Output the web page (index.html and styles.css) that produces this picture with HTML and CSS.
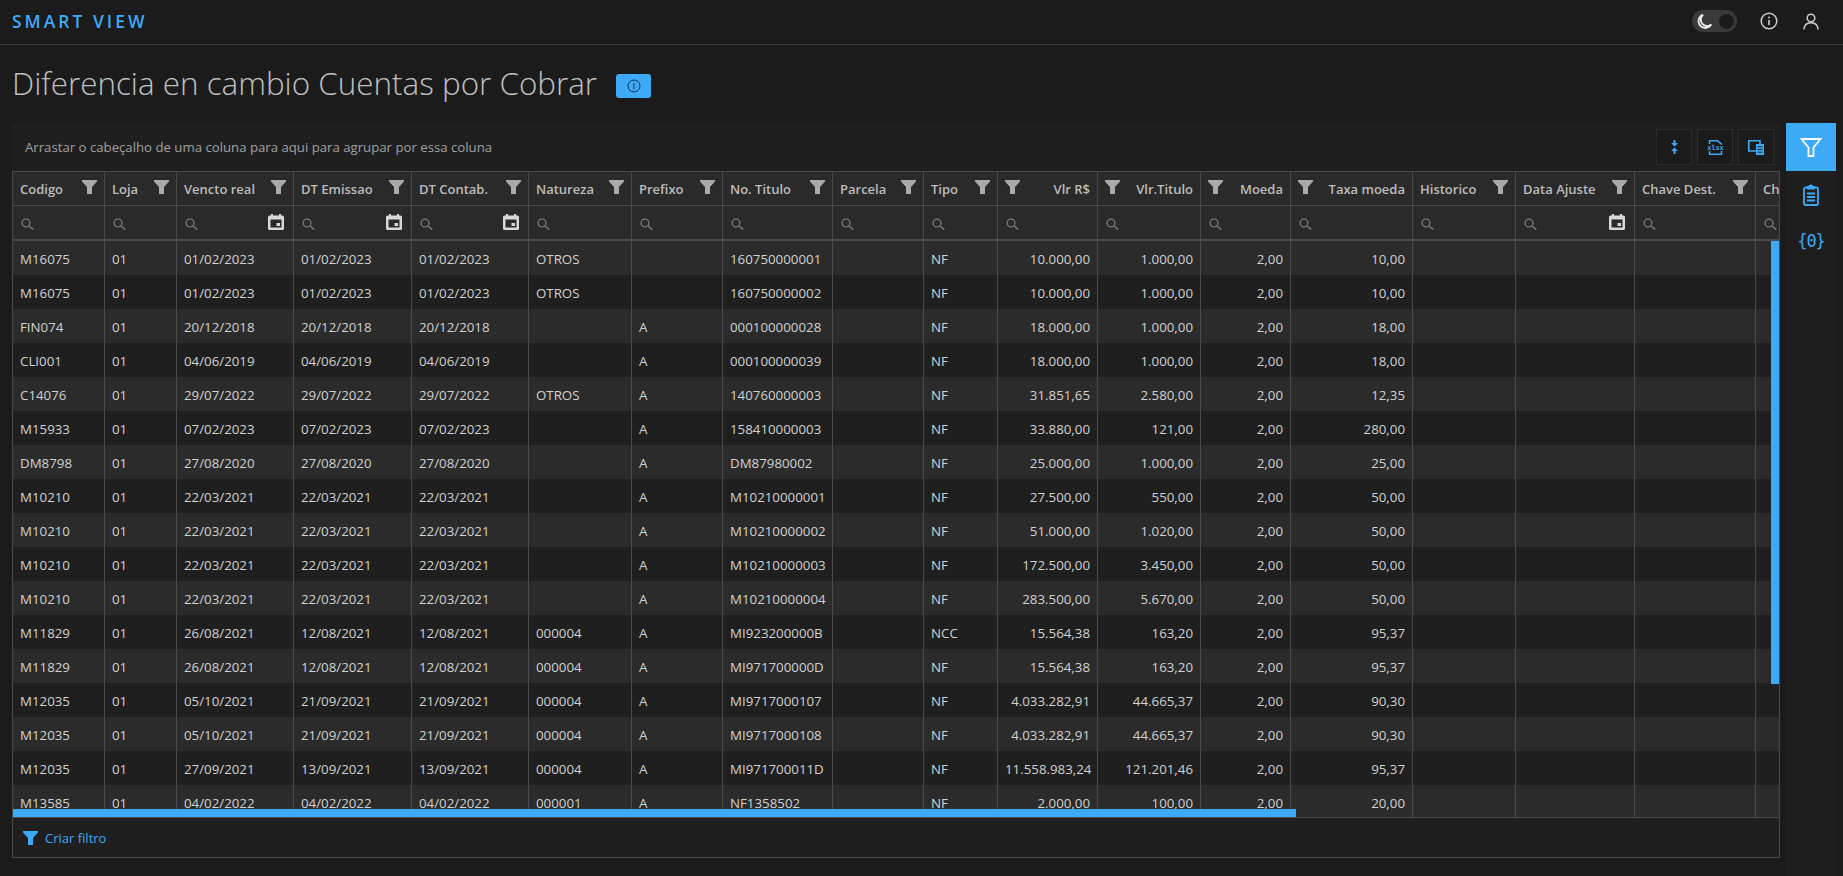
FILE: index.html
```html
<!DOCTYPE html>
<html lang="pt">
<head>
<meta charset="utf-8">
<title>Smart View</title>
<link rel="stylesheet" href="styles.css">
</head>
<body>
<svg class="defs" width="0" height="0">
  <symbol id="funnel" viewBox="0 0 15 14"><path d="M0 0H15V1.500L10 7V14H5V7L0 1.500Z"/></symbol>
  <symbol id="search" viewBox="0 0 13 12"><circle cx="5" cy="5" r="3.9" fill="none" stroke="currentColor" stroke-width="1.4"/><path d="M8 8L12.3 11.6" stroke="currentColor" stroke-width="1.6" fill="none"/></symbol>
  <symbol id="cal" viewBox="0 0 16 16"><path fill-rule="evenodd" d="M3 0H5V1.5H11V0H13V1.5H14.5A1.5 1.5 0 0 1 16 3V14.5A1.5 1.5 0 0 1 14.5 16H1.5A1.5 1.5 0 0 1 0 14.5V3A1.5 1.5 0 0 1 1.500 1.500H3ZM2.500 5.500V13.500H13.500V5.500ZM8.500 9H12V12H8.500Z"/></symbol>
</svg>

<header class="topbar">
  <div class="brand">SMART VIEW</div>
  <div class="top-actions">
    <div class="toggle">
      <svg class="moon" width="15" height="15" viewBox="0 0 15 15"><path d="M6 .8A6.800 6.800 0 1 0 14.300 10.500 6.200 6.200 0 0 1 6 .8Z" fill="none" stroke="#eee" stroke-width="1.800"/></svg>
      <span class="knob"></span>
    </div>
    <svg class="top-info" width="18" height="18" viewBox="0 0 18 18"><circle cx="9" cy="9" r="7.800" fill="none" stroke="#ccc" stroke-width="1.500"/><path d="M9 8V13" stroke="#ccc" stroke-width="1.700"/><circle cx="9" cy="5.500" r="1" fill="#ccc"/></svg>
    <svg class="top-user" width="18" height="17" viewBox="0 0 18 17"><circle cx="9" cy="5" r="3.800" fill="none" stroke="#ccc" stroke-width="1.500"/><path d="M1.800 16.500C2.300 12 5 9.700 9 9.700S15.700 12 16.200 16.500" fill="none" stroke="#ccc" stroke-width="1.500"/></svg>
  </div>
</header>

<div class="layout">
  <main class="main">
    <div class="title-row">
      <h1 class="title">Diferencia en cambio Cuentas por Cobrar</h1>
      <span class="badge">
        <svg width="14" height="14" viewBox="0 0 14 14"><circle cx="7" cy="7" r="6" fill="none" stroke="#12314a" stroke-width="1"/><path d="M7 4V10.500" stroke="#12314a" stroke-width="1"/></svg>
      </span>
    </div>

    <div class="toolbar">
      <span class="group-hint">Arrastar o cabeçalho de uma coluna para aqui para agrupar por essa coluna</span>
      <div class="tool-buttons">
        <button class="tool-btn" type="button">
          <svg width="7" height="14" viewBox="0 0 7 14" fill="#3daaf8"><path d="M2.500 0H4.500V3H7L3.500 6.500 0 3H2.500ZM3.500 7.500L7 11H4.500V14H2.500V11H0Z"/></svg>
        </button>
        <button class="tool-btn" type="button">
          <svg width="17" height="15" viewBox="0 0 17 15" fill="none" stroke="#3daaf8" stroke-width="1.500"><path d="M2.500 4V.8H10.500L14.500 4.200V4.500M2.500 11V14.200H14.500V11"/><text x="8.500" y="10" class="xlsx" text-anchor="middle">xlsx</text></svg>
        </button>
        <button class="tool-btn" type="button">
          <svg width="16" height="15" viewBox="0 0 16 15" fill="none" stroke="#3daaf8" stroke-width="1.600"><path d="M8 11H.8V.8H12V4"/><path d="M8 4H16V15H8Z" fill="#3daaf8" stroke="none"/><path d="M9.500 6.800H14.500M9.500 9.500H14.500M9.500 12.200H14.500" stroke="#1b1b1b" stroke-width="1"/></svg>
        </button>
      </div>
    </div>

    <section class="frame">
      <div class="grid-scroll">
        <table class="grid">
          <colgroup>
            <col class="c92"><col class="c72"><col class="c117"><col class="c118"><col class="c117"><col class="c103"><col class="c91"><col class="c110"><col class="c91"><col class="c74"><col class="c100"><col class="c103"><col class="c90"><col class="c122"><col class="c103"><col class="c119"><col class="c121"><col class="c120">
          </colgroup>
          <thead>
            <tr class="head">
              <th><div class="th"><span>Codigo</span><svg class="fn"><use href="#funnel"/></svg></div></th>
              <th><div class="th"><span>Loja</span><svg class="fn"><use href="#funnel"/></svg></div></th>
              <th><div class="th"><span>Vencto real</span><svg class="fn"><use href="#funnel"/></svg></div></th>
              <th><div class="th"><span>DT Emissao</span><svg class="fn"><use href="#funnel"/></svg></div></th>
              <th><div class="th"><span>DT Contab.</span><svg class="fn"><use href="#funnel"/></svg></div></th>
              <th><div class="th"><span>Natureza</span><svg class="fn"><use href="#funnel"/></svg></div></th>
              <th><div class="th"><span>Prefixo</span><svg class="fn"><use href="#funnel"/></svg></div></th>
              <th><div class="th"><span>No. Titulo</span><svg class="fn"><use href="#funnel"/></svg></div></th>
              <th><div class="th"><span>Parcela</span><svg class="fn"><use href="#funnel"/></svg></div></th>
              <th><div class="th"><span>Tipo</span><svg class="fn"><use href="#funnel"/></svg></div></th>
              <th><div class="th"><svg class="fn"><use href="#funnel"/></svg><span>Vlr R$</span></div></th>
              <th><div class="th"><svg class="fn"><use href="#funnel"/></svg><span>Vlr.Titulo</span></div></th>
              <th><div class="th"><svg class="fn"><use href="#funnel"/></svg><span>Moeda</span></div></th>
              <th><div class="th"><svg class="fn"><use href="#funnel"/></svg><span>Taxa moeda</span></div></th>
              <th><div class="th"><span>Historico</span><svg class="fn"><use href="#funnel"/></svg></div></th>
              <th><div class="th"><span>Data Ajuste</span><svg class="fn"><use href="#funnel"/></svg></div></th>
              <th><div class="th"><span>Chave Dest.</span><svg class="fn"><use href="#funnel"/></svg></div></th>
              <th><div class="th"><span>Ch</span></div></th>
            </tr>
            <tr class="filter">
              <th><div class="fc"><svg class="sr"><use href="#search"/></svg></div></th>
              <th><div class="fc"><svg class="sr"><use href="#search"/></svg></div></th>
              <th><div class="fc"><svg class="sr"><use href="#search"/></svg><svg class="cl"><use href="#cal"/></svg></div></th>
              <th><div class="fc"><svg class="sr"><use href="#search"/></svg><svg class="cl"><use href="#cal"/></svg></div></th>
              <th><div class="fc"><svg class="sr"><use href="#search"/></svg><svg class="cl"><use href="#cal"/></svg></div></th>
              <th><div class="fc"><svg class="sr"><use href="#search"/></svg></div></th>
              <th><div class="fc"><svg class="sr"><use href="#search"/></svg></div></th>
              <th><div class="fc"><svg class="sr"><use href="#search"/></svg></div></th>
              <th><div class="fc"><svg class="sr"><use href="#search"/></svg></div></th>
              <th><div class="fc"><svg class="sr"><use href="#search"/></svg></div></th>
              <th><div class="fc"><svg class="sr"><use href="#search"/></svg></div></th>
              <th><div class="fc"><svg class="sr"><use href="#search"/></svg></div></th>
              <th><div class="fc"><svg class="sr"><use href="#search"/></svg></div></th>
              <th><div class="fc"><svg class="sr"><use href="#search"/></svg></div></th>
              <th><div class="fc"><svg class="sr"><use href="#search"/></svg></div></th>
              <th><div class="fc"><svg class="sr"><use href="#search"/></svg><svg class="cl"><use href="#cal"/></svg></div></th>
              <th><div class="fc"><svg class="sr"><use href="#search"/></svg></div></th>
              <th><div class="fc"><svg class="sr"><use href="#search"/></svg></div></th>
            </tr>
          </thead>
          <tbody>
            <tr><td>M16075</td><td>01</td><td>01/02/2023</td><td>01/02/2023</td><td>01/02/2023</td><td>OTROS</td><td></td><td>160750000001</td><td></td><td>NF</td><td class="n">10.000,00</td><td class="n">1.000,00</td><td class="n">2,00</td><td class="n">10,00</td><td></td><td></td><td></td><td></td></tr>
            <tr><td>M16075</td><td>01</td><td>01/02/2023</td><td>01/02/2023</td><td>01/02/2023</td><td>OTROS</td><td></td><td>160750000002</td><td></td><td>NF</td><td class="n">10.000,00</td><td class="n">1.000,00</td><td class="n">2,00</td><td class="n">10,00</td><td></td><td></td><td></td><td></td></tr>
            <tr><td>FIN074</td><td>01</td><td>20/12/2018</td><td>20/12/2018</td><td>20/12/2018</td><td></td><td>A</td><td>000100000028</td><td></td><td>NF</td><td class="n">18.000,00</td><td class="n">1.000,00</td><td class="n">2,00</td><td class="n">18,00</td><td></td><td></td><td></td><td></td></tr>
            <tr><td>CLI001</td><td>01</td><td>04/06/2019</td><td>04/06/2019</td><td>04/06/2019</td><td></td><td>A</td><td>000100000039</td><td></td><td>NF</td><td class="n">18.000,00</td><td class="n">1.000,00</td><td class="n">2,00</td><td class="n">18,00</td><td></td><td></td><td></td><td></td></tr>
            <tr><td>C14076</td><td>01</td><td>29/07/2022</td><td>29/07/2022</td><td>29/07/2022</td><td>OTROS</td><td>A</td><td>140760000003</td><td></td><td>NF</td><td class="n">31.851,65</td><td class="n">2.580,00</td><td class="n">2,00</td><td class="n">12,35</td><td></td><td></td><td></td><td></td></tr>
            <tr><td>M15933</td><td>01</td><td>07/02/2023</td><td>07/02/2023</td><td>07/02/2023</td><td></td><td>A</td><td>158410000003</td><td></td><td>NF</td><td class="n">33.880,00</td><td class="n">121,00</td><td class="n">2,00</td><td class="n">280,00</td><td></td><td></td><td></td><td></td></tr>
            <tr><td>DM8798</td><td>01</td><td>27/08/2020</td><td>27/08/2020</td><td>27/08/2020</td><td></td><td>A</td><td>DM87980002</td><td></td><td>NF</td><td class="n">25.000,00</td><td class="n">1.000,00</td><td class="n">2,00</td><td class="n">25,00</td><td></td><td></td><td></td><td></td></tr>
            <tr><td>M10210</td><td>01</td><td>22/03/2021</td><td>22/03/2021</td><td>22/03/2021</td><td></td><td>A</td><td>M10210000001</td><td></td><td>NF</td><td class="n">27.500,00</td><td class="n">550,00</td><td class="n">2,00</td><td class="n">50,00</td><td></td><td></td><td></td><td></td></tr>
            <tr><td>M10210</td><td>01</td><td>22/03/2021</td><td>22/03/2021</td><td>22/03/2021</td><td></td><td>A</td><td>M10210000002</td><td></td><td>NF</td><td class="n">51.000,00</td><td class="n">1.020,00</td><td class="n">2,00</td><td class="n">50,00</td><td></td><td></td><td></td><td></td></tr>
            <tr><td>M10210</td><td>01</td><td>22/03/2021</td><td>22/03/2021</td><td>22/03/2021</td><td></td><td>A</td><td>M10210000003</td><td></td><td>NF</td><td class="n">172.500,00</td><td class="n">3.450,00</td><td class="n">2,00</td><td class="n">50,00</td><td></td><td></td><td></td><td></td></tr>
            <tr><td>M10210</td><td>01</td><td>22/03/2021</td><td>22/03/2021</td><td>22/03/2021</td><td></td><td>A</td><td>M10210000004</td><td></td><td>NF</td><td class="n">283.500,00</td><td class="n">5.670,00</td><td class="n">2,00</td><td class="n">50,00</td><td></td><td></td><td></td><td></td></tr>
            <tr><td>M11829</td><td>01</td><td>26/08/2021</td><td>12/08/2021</td><td>12/08/2021</td><td>000004</td><td>A</td><td>MI923200000B</td><td></td><td>NCC</td><td class="n">15.564,38</td><td class="n">163,20</td><td class="n">2,00</td><td class="n">95,37</td><td></td><td></td><td></td><td></td></tr>
            <tr><td>M11829</td><td>01</td><td>26/08/2021</td><td>12/08/2021</td><td>12/08/2021</td><td>000004</td><td>A</td><td>MI971700000D</td><td></td><td>NF</td><td class="n">15.564,38</td><td class="n">163,20</td><td class="n">2,00</td><td class="n">95,37</td><td></td><td></td><td></td><td></td></tr>
            <tr><td>M12035</td><td>01</td><td>05/10/2021</td><td>21/09/2021</td><td>21/09/2021</td><td>000004</td><td>A</td><td>MI9717000107</td><td></td><td>NF</td><td class="n">4.033.282,91</td><td class="n">44.665,37</td><td class="n">2,00</td><td class="n">90,30</td><td></td><td></td><td></td><td></td></tr>
            <tr><td>M12035</td><td>01</td><td>05/10/2021</td><td>21/09/2021</td><td>21/09/2021</td><td>000004</td><td>A</td><td>MI9717000108</td><td></td><td>NF</td><td class="n">4.033.282,91</td><td class="n">44.665,37</td><td class="n">2,00</td><td class="n">90,30</td><td></td><td></td><td></td><td></td></tr>
            <tr><td>M12035</td><td>01</td><td>27/09/2021</td><td>13/09/2021</td><td>13/09/2021</td><td>000004</td><td>A</td><td>MI971700011D</td><td></td><td>NF</td><td class="n">11.558.983,24</td><td class="n">121.201,46</td><td class="n">2,00</td><td class="n">95,37</td><td></td><td></td><td></td><td></td></tr>
            <tr><td>M13585</td><td>01</td><td>04/02/2022</td><td>04/02/2022</td><td>04/02/2022</td><td>000001</td><td>A</td><td>NF1358502</td><td></td><td>NF</td><td class="n">2.000,00</td><td class="n">100,00</td><td class="n">2,00</td><td class="n">20,00</td><td></td><td></td><td></td><td></td></tr>
          </tbody>
        </table>
        <div class="bar-v"></div>
        <div class="bar-h"></div>
      </div>
      <footer class="grid-foot">
        <svg class="foot-fn"><use href="#funnel"/></svg>
        <span>Criar filtro</span>
      </footer>
    </section>
  </main>

  <aside class="side">
    <div class="side-btn active">
      <svg width="22" height="19" viewBox="0 0 22 19" fill="none" stroke="#fff" stroke-width="1.800"><path d="M1.500 1H20.500L13.500 9.500V18H8.500V9.500Z"/></svg>
    </div>
    <div class="side-btn">
      <svg width="16" height="22" viewBox="0 0 16 22" fill="none" stroke="#3daaf8" stroke-width="1.800"><rect x="1" y="3.500" width="14" height="17.500" rx="1.500"/><path d="M5 4.500V2.800H6.500A1.500 1.500 0 0 1 9.500 2.800H11V4.500Z" fill="#3daaf8"/><path d="M4 9.500H12M4 13H12M4 16.500H12"/></svg>
    </div>
    <div class="side-btn code">{0}</div>
  </aside>
</div>
</body>
</html>
```

FILE: styles.css
```css
* { box-sizing: border-box; }

html, body {
  margin: 0;
  height: 876px;
  overflow: hidden;
}

body {
  background: #1b1b1b;
  color: #d2d2d2;
  font-family: "Open Sans", "Noto Sans", sans-serif;
  font-size: 13px;
  display: flex;
  flex-direction: column;
}

.defs { position: absolute; }

.topbar {
  height: 45px;
  flex: none;
  border-bottom: 1px solid #3a3a3a;
  display: flex;
  align-items: center;
  justify-content: space-between;
  padding: 0 23px 2px 12px;
}

.brand {
  color: #3daaf8;
  font-size: 17.500px;
  font-weight: 600;
  letter-spacing: 3px;
}

.top-actions {
  display: flex;
  align-items: center;
}

.toggle {
  width: 45px;
  height: 22px;
  border-radius: 11px;
  background: #3a3a3a;
  display: flex;
  align-items: center;
  justify-content: space-between;
  padding: 0 3px 0 5px;
}

.moon { display: block; }

.knob {
  width: 15px;
  height: 15px;
  border-radius: 50%;
  background: #1b1b1b;
}

.top-info { margin-left: 23px; }
.top-user { margin-left: 24px; }

.layout {
  flex: 1;
  display: flex;
  min-height: 0;
}

.main {
  flex: 1;
  min-width: 0;
  padding: 0 0 18px 12px;
  display: flex;
  flex-direction: column;
}

.title-row {
  height: 78px;
  flex: none;
  display: flex;
  align-items: center;
}

.title {
  margin: 0 0 3px;
  font-size: 31.400px;
  font-weight: 300;
  color: #c0c0c0;
  white-space: nowrap;
}

.badge {
  width: 35px;
  height: 24px;
  margin: 4px 0 0 19px;
  border-radius: 3px;
  background: #3daaf8;
  display: flex;
  align-items: center;
  justify-content: center;
}

.toolbar {
  height: 48px;
  flex: none;
  background: #1f1f1f;
  display: flex;
  align-items: center;
  justify-content: space-between;
  padding: 0 6px 0 13px;
}

.group-hint {
  color: #a0a0a0;
  font-size: 13.200px;
}

.tool-buttons {
  display: flex;
  gap: 5px;
}

.tool-btn {
  width: 36px;
  height: 36px;
  padding: 0;
  background: #1b1b1b;
  border: 1px solid #2c2c2c;
  display: flex;
  align-items: center;
  justify-content: center;
}

.xlsx {
  font-family: "DejaVu Sans Mono", monospace;
  font-size: 6.800px;
  font-weight: 700;
  fill: #3daaf8;
  stroke: none;
}

.frame {
  flex: 1;
  min-height: 0;
  border: 1px solid #4a4a4a;
  background: #1f1f1f;
  display: flex;
  flex-direction: column;
}

.grid-scroll {
  position: relative;
  flex: 1;
  min-height: 0;
  overflow: hidden;
}

.grid {
  table-layout: fixed;
  width: 1783px;
  border-collapse: separate;
  border-spacing: 0;
}

.c72 { width: 72px; }
.c74 { width: 74px; }
.c90 { width: 90px; }
.c91 { width: 91px; }
.c92 { width: 92px; }
.c100 { width: 100px; }
.c103 { width: 103px; }
.c110 { width: 110px; }
.c117 { width: 117px; }
.c118 { width: 118px; }
.c119 { width: 119px; }
.c120 { width: 120px; }
.c121 { width: 121px; }
.c122 { width: 122px; }

.grid th,
.grid td {
  padding: 0;
  border-right: 1px solid #4a4a4a;
  white-space: nowrap;
  overflow: hidden;
}

.grid th {
  background: #2a2a2a;
  font-weight: 600;
  color: #bcbcbc;
  text-align: left;
}

.head th {
  height: 34px;
  border-bottom: 1px solid #4a4a4a;
}

.filter th {
  height: 35px;
  border-bottom: 2px solid #4a4a4a;
}

.th {
  display: flex;
  align-items: center;
  justify-content: space-between;
  padding: 0 7px 0 7px;
  font-size: 13px;
}

.fn {
  width: 15px;
  height: 14px;
  flex: none;
  fill: #aaa;
  margin-top: -3px;
}

.fc {
  display: flex;
  align-items: center;
  justify-content: space-between;
  padding: 0 9px 0 8px;
}

.sr {
  width: 13px;
  height: 12px;
  color: #777;
  margin-top: 2px;
}

.cl {
  width: 16px;
  height: 16px;
  fill: #d8d8d8;
  margin-top: -1px;
}

.grid td {
  height: 34px;
  padding: 2px 7px 0;
  font-size: 13.300px;
  color: #d2d2d2;
}

.grid td.n { text-align: right; }

tbody tr:nth-child(odd) td { background: #2b2b2b; }
tbody tr:nth-child(even) td { background: #1f1f1f; }

.bar-v {
  position: absolute;
  top: 69px;
  right: 0;
  width: 8px;
  height: 443px;
  background: #3daaf8;
}

.bar-h {
  position: absolute;
  left: 0;
  bottom: 0;
  width: 1283px;
  height: 8px;
  background: #3daaf8;
}

.grid-foot {
  height: 40px;
  flex: none;
  border-top: 1px solid #4a4a4a;
  display: flex;
  align-items: center;
  padding-left: 10px;
  gap: 7px;
  color: #3daaf8;
  font-size: 13px;
}

.foot-fn {
  width: 15px;
  height: 14px;
  fill: #3daaf8;
}

.side {
  width: 50px;
  flex: none;
  margin: 78px 7px 0 6px;
  background: #1e1e1e;
  display: flex;
  flex-direction: column;
  align-items: center;
}

.side-btn {
  width: 50px;
  height: 48px;
  display: flex;
  align-items: center;
  justify-content: center;
}

.side-btn.active { background: #3daaf8; }

.side-btn.code {
  color: #3daaf8;
  font-family: "DejaVu Sans Mono", monospace;
  font-size: 17px;
  letter-spacing: -1px;
  margin-top: -2px;
}
```
